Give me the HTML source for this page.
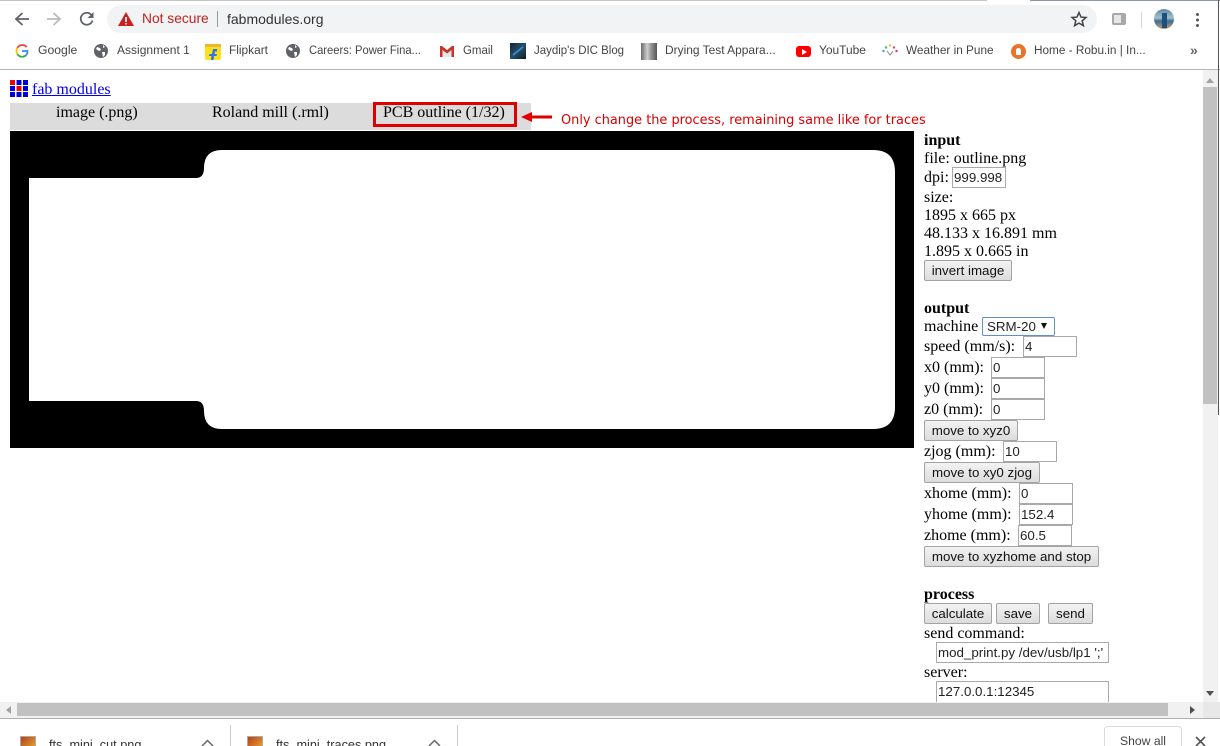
<!DOCTYPE html>
<html><head><meta charset="utf-8"><style>
html,body{margin:0;padding:0;width:1220px;height:746px;overflow:hidden;background:#fff}
body{position:relative;font-family:"Liberation Serif",serif;font-size:16px;color:#000}
.a{position:absolute;white-space:nowrap}
.t{position:absolute;white-space:nowrap;font-size:16px;line-height:18px;margin-top:1px}
.b{position:absolute;box-sizing:border-box;border:1px solid #a3a3a3;border-radius:2px;background:linear-gradient(#f3f3f3,#dcdcdc);font:13.33px/19px "Liberation Sans",sans-serif;color:#111;text-align:center;height:21px}
.i{position:absolute;box-sizing:border-box;border:1px solid #a9a9a9;background:#fff;font:13.33px/19px "Liberation Sans",sans-serif;color:#222;height:21px;padding-left:1px;white-space:nowrap;overflow:hidden}
.bm{position:absolute;top:43px;font:12.2px/15px "Liberation Sans",sans-serif;color:#444;white-space:nowrap;transform-origin:0 50%}
svg{position:absolute;overflow:visible}
</style></head><body>
<div class="a" style="left:0;top:0;width:987px;height:1px;background:#c4c4c4"></div>
<div class="a" style="left:1030px;top:0;width:190px;height:1px;background:#8a98a8"></div>
<div class="a" style="left:107px;top:5px;width:990px;height:28px;border-radius:14px;background:#f1f3f4"></div>

<svg style="left:14px;top:11px" width="16" height="16" viewBox="0 0 16 16"><path d="M15 8H2.500M8.500 2L2 8l6.500 6" fill="none" stroke="#5f6368" stroke-width="1.800"/></svg>
<svg style="left:46px;top:11px" width="16" height="16" viewBox="0 0 16 16"><path d="M1 8h12.500M7.500 2L14 8l-6.500 6" fill="none" stroke="#b9bbbe" stroke-width="1.800"/></svg>
<svg style="left:79px;top:11px" width="16" height="16" viewBox="0 0 16 16"><path d="M13.500 9.500A6 6 0 1 1 12.300 3.800" fill="none" stroke="#5f6368" stroke-width="1.800"/><path d="M14.500 1v6h-6z" fill="#5f6368"/></svg>
<svg style="left:118px;top:12px" width="16" height="14" viewBox="0 0 16 14"><path d="M8 0L16 14H0z" fill="#c5221f"/><path d="M7.200 5h1.600v5H7.200zM7.200 11h1.600v1.500H7.200z" fill="#fff"/></svg>
<div class="a" style="left:142px;top:11px;font:13.8px/16px 'Liberation Sans',sans-serif;color:#c5221f">Not secure</div>
<div class="a" style="left:217px;top:11px;width:1px;height:16px;background:#999"></div>
<div class="a" style="left:227px;top:11px;font:14px/16px 'Liberation Sans',sans-serif;color:#333">fabmodules.org</div>
<svg style="left:1071px;top:11px" width="16" height="16" viewBox="0 0 16 16"><path d="M8 1.500l2 4.600 5 .4-3.800 3.300 1.200 4.900L8 12.100l-4.400 2.600 1.200-4.900L1 6.500l5-.4z" fill="none" stroke="#444" stroke-width="1.500"/></svg>
<div class="a" style="left:1112px;top:13px;width:14px;height:12px;background:#a8a8a8;border-radius:2px"></div>
<div class="a" style="left:1114px;top:15px;width:7px;height:8px;background:#e6e6e6"></div>
<div class="a" style="left:1141px;top:12px;width:1px;height:16px;background:#d5d5d5"></div>
<div class="a" style="left:1154px;top:9px;width:20px;height:20px;border-radius:10px;background:linear-gradient(#5d8aa5 0,#a3c0c8 45%,#3a6d96 60%,#c8a06e 100%)"></div>
<div class="a" style="left:1162px;top:13px;width:5px;height:15px;background:#1f4f80"></div>
<div class="a" style="left:1196px;top:13px;width:3px;height:3px;border-radius:2px;background:#555;box-shadow:0 5.500px 0 #555,0 11px 0 #555"></div>

<svg style="left:15px;top:44px" width="14" height="14" viewBox="0 0 14 14"><path d="M11.700 3.200A5.500 5.500 0 0 0 2.500 3.800" fill="none" stroke="#ea4335" stroke-width="1.800"/><path d="M2.500 3.800a5.500 5.500 0 0 0 0 6.400" fill="none" stroke="#fbbc05" stroke-width="1.800"/><path d="M2.500 10.200a5.500 5.500 0 0 0 8.800 .7" fill="none" stroke="#34a853" stroke-width="1.800"/><path d="M7 7h5.500a5.500 5.500 0 0 1-1.200 3.900" fill="none" stroke="#4285f4" stroke-width="1.800"/></svg>
<div class="bm" style="left:38px">Google</div>
<svg style="left:94px;top:44px" width="14" height="14" viewBox="0 0 14 14"><circle cx="7" cy="7" r="7" fill="#5f6368"/><path d="M3 3l3 1 1 2-2 1-3-2zM8 8l3 0 0 3-2 2zM9 1l2 2-2 1z" fill="#fff"/></svg>
<div class="bm" style="left:117px;transform:scaleX(.986)">Assignment 1</div>
<div class="a" style="left:205px;top:44px;width:16px;height:16px;border-radius:2px;background:#fde016"></div>
<div class="a" style="left:205px;top:44px;width:16px;height:3px;background:#e9b934"></div>
<svg style="left:209px;top:49px" width="9" height="11" viewBox="0 0 9 11"><path d="M8 0H4L3 5H0.500L0 7h2.500L2 11h2.500L5 7h2.500L8 5H5.500L6 2.500h2z" fill="#2874f0"/></svg>
<div class="bm" style="left:229px;transform:scaleX(.975)">Flipkart</div>
<svg style="left:286px;top:44px" width="14" height="14" viewBox="0 0 14 14"><circle cx="7" cy="7" r="7" fill="#5f6368"/><path d="M3 3l3 1 1 2-2 1-3-2zM8 8l3 0 0 3-2 2zM9 1l2 2-2 1z" fill="#fff"/></svg>
<div class="bm" style="left:309px;transform:scaleX(.918)">Careers: Power Fina...</div>
<svg style="left:440px;top:46px" width="14" height="11" viewBox="0 0 14 11"><path d="M2.500 3L7 7l4.500-4v8h-9z" fill="#e8e8e8"/><path d="M0 0h2l5 4 5-4h2v11h-2.500V4L7 7.500 2.500 4v7H0z" fill="#c5372c"/></svg>
<div class="bm" style="left:463px;transform:scaleX(.94)">Gmail</div>
<div class="a" style="left:510px;top:43px;width:16px;height:16px;background:linear-gradient(135deg,#15222e,#24506e 50%,#101820)"></div>
<svg style="left:512px;top:45px" width="12" height="12" viewBox="0 0 12 12"><path d="M1 10L11 2" stroke="#3f8fd0" stroke-width="1.500"/></svg>
<div class="bm" style="left:534px;transform:scaleX(.94)">Jaydip's DIC Blog</div>
<div class="a" style="left:641px;top:43px;width:16px;height:17px;background:linear-gradient(90deg,#6b6b6b,#cfcfcf 40%,#9a9a9a 60%,#555)"></div>
<div class="bm" style="left:665px;transform:scaleX(.98)">Drying Test Appara...</div>
<div class="a" style="left:796px;top:46px;width:15px;height:11px;border-radius:3px;background:#f00"></div>
<div class="a" style="left:802px;top:49px;width:0;height:0;border-left:5px solid #fff;border-top:3px solid transparent;border-bottom:3px solid transparent"></div>
<div class="bm" style="left:819px;transform:scaleX(.98)">YouTube</div>
<svg style="left:882px;top:44px" width="16" height="13" viewBox="0 0 16 13"><circle cx="1.500" cy="7" r="1.200" fill="#3aa0d8"/><circle cx="4" cy="3.500" r="1.200" fill="#47b36b"/><circle cx="8" cy="1.500" r="1.200" fill="#f2b233"/><circle cx="12" cy="3.500" r="1.200" fill="#e04a7d"/><circle cx="14.500" cy="7" r="1.200" fill="#d8336e"/><path d="M5 7l3 4 3-4" fill="none" stroke="#888"/></svg>
<div class="bm" style="left:906px;transform:scaleX(.967)">Weather in Pune</div>
<div class="a" style="left:1011px;top:44px;width:15px;height:15px;border-radius:8px;background:#e8742a"></div>
<div class="a" style="left:1016px;top:48px;width:5px;height:7px;background:#fff;border-radius:3px 3px 0 0"></div>
<div class="bm" style="left:1034px;transform:scaleX(.966)">Home - Robu.in | In...</div>
<div class="a" style="left:1190px;top:42px;font:bold 14px/16px 'Liberation Sans',sans-serif;color:#666">»</div>
<div class="a" style="left:0;top:69px;width:1220px;height:1px;background:#b5b5b5"></div>

<svg style="left:10px;top:80px" width="18" height="17" viewBox="0 0 18 17"><g fill="#00d"><rect x="0" y="0" width="5" height="5" fill="#e00"/><rect x="6.500" y="0" width="5" height="5"/><rect x="13" y="0" width="5" height="5"/><rect x="0" y="6" width="5" height="5"/><rect x="6.500" y="6" width="5" height="5" fill="#e00"/><rect x="13" y="6" width="5" height="5"/><rect x="0" y="12" width="5" height="5"/><rect x="6.500" y="12" width="5" height="5"/><rect x="13" y="12" width="5" height="5"/></g></svg>
<a class="a" style="left:32px;top:81px;line-height:18px;font-size:16px;color:#00e;text-decoration:underline">fab modules</a>

<div class="a" style="left:10px;top:103px;width:521px;height:27px;background:#dcdcdc"></div>
<div class="t" style="left:56px;top:103px">image (.png)</div>
<div class="t" style="left:212px;top:103px">Roland mill (.rml)</div>
<div class="t" style="left:383px;top:103px">PCB outline (1/32)</div>
<div class="a" style="left:373px;top:102px;width:144px;height:25px;box-sizing:border-box;border:3px solid #e00000"></div>
<svg style="left:521px;top:112px" width="31" height="10" viewBox="0 0 31 10"><path d="M0 5L11 0v3.500h20v3H11V10z" fill="#e00000"/></svg>
<div class="a" style="left:561px;top:112px;margin-top:1px;font:13px/16px 'DejaVu Sans',sans-serif;color:#d90000;transform-origin:0 50%;transform:scaleX(.992)">Only change the process, remaining same like for traces</div>

<svg style="left:10px;top:131px" width="904" height="317" viewBox="0 0 904 317">
<rect width="904" height="317" fill="#000"/>
<path d="M19 47H186Q194 47 194 37Q194 19 212 19H863Q885 19 885 41V276Q885 298 863 298H212Q194 298 194 280Q194 270 186 270H19z" fill="#fff"/>
</svg>

<b class="t" style="left:924px;top:131px">input</b>
<div class="t" style="left:924px;top:149px">file: outline.png</div>
<div class="t" style="left:924px;top:168px">dpi:</div>
<div class="i" style="left:952px;top:167px;width:54px">999.998</div>
<div class="t" style="left:924px;top:188px">size:</div>
<div class="t" style="left:924px;top:206px">1895 x 665 px</div>
<div class="t" style="left:924px;top:224px">48.133 x 16.891 mm</div>
<div class="t" style="left:924px;top:242px">1.895 x 0.665 in</div>
<div class="b" style="left:924px;top:260px;width:88px">invert image</div>

<b class="t" style="left:924px;top:299px">output</b>
<div class="t" style="left:924px;top:317px">machine</div>
<div class="a" style="left:982px;top:317px;width:73px;height:19px;box-sizing:border-box;border:1px solid #5b8fd6;border-radius:2px;font:13.33px/17px 'Liberation Sans',sans-serif;padding-left:4px;color:#222">SRM-20</div>
<div class="a" style="left:1041px;top:323px;width:0;height:0;border-top:6px solid #111;border-left:3.500px solid transparent;border-right:3.500px solid transparent"></div>
<div class="t" style="left:924px;top:337px">speed (mm/s):</div>
<div class="i" style="left:1023px;top:336px;width:54px">4</div>
<div class="t" style="left:924px;top:358px">x0 (mm):</div>
<div class="i" style="left:991px;top:357px;width:54px">0</div>
<div class="t" style="left:924px;top:379px">y0 (mm):</div>
<div class="i" style="left:991px;top:378px;width:54px">0</div>
<div class="t" style="left:924px;top:400px">z0 (mm):</div>
<div class="i" style="left:991px;top:399px;width:54px">0</div>
<div class="b" style="left:924px;top:420px;width:94px">move to xyz0</div>
<div class="t" style="left:924px;top:442px">zjog (mm):</div>
<div class="i" style="left:1003px;top:441px;width:54px">10</div>
<div class="b" style="left:924px;top:462px;width:116px">move to xy0 zjog</div>
<div class="t" style="left:924px;top:484px">xhome (mm):</div>
<div class="i" style="left:1019px;top:483px;width:54px">0</div>
<div class="t" style="left:924px;top:505px">yhome (mm):</div>
<div class="i" style="left:1019px;top:504px;width:54px">152.4</div>
<div class="t" style="left:924px;top:526px">zhome (mm):</div>
<div class="i" style="left:1018px;top:525px;width:54px">60.5</div>
<div class="b" style="left:924px;top:546px;width:175px">move to xyzhome and stop</div>

<b class="t" style="left:924px;top:585px">process</b>
<div class="b" style="left:924px;top:603px;width:68px">calculate</div>
<div class="b" style="left:996px;top:603px;width:44px">save</div>
<div class="b" style="left:1048px;top:603px;width:45px">send</div>
<div class="t" style="left:924px;top:624px">send command:</div>
<div class="i" style="left:936px;top:642px;width:173px">mod_print.py /dev/usb/lp1 ';'</div>
<div class="t" style="left:924px;top:663px">server:</div>
<div class="i" style="left:936px;top:681px;width:173px;height:30px">127.0.0.1:12345</div>

<div class="a" style="left:1203px;top:70px;width:15px;height:633px;background:#f1f1f1"></div>
<div class="a" style="left:1203px;top:87px;width:14px;height:317px;background:#c1c1c1"></div>
<div class="a" style="left:1206px;top:78px;width:0;height:0;border-bottom:5px solid #a3a3a3;border-left:4px solid transparent;border-right:4px solid transparent"></div>
<div class="a" style="left:1206px;top:691px;width:0;height:0;border-top:5px solid #505050;border-left:4px solid transparent;border-right:4px solid transparent"></div>
<div class="a" style="left:1218px;top:0;width:1px;height:415px;background:#555"></div>
<div class="a" style="left:0;top:702px;width:1203px;height:16px;background:#f1f1f1"></div>
<div class="a" style="left:1203px;top:702px;width:17px;height:16px;background:#e8e8e8"></div>
<div class="a" style="left:17px;top:703px;width:1151px;height:13px;background:#c1c1c1"></div>
<div class="a" style="left:6px;top:706px;width:0;height:0;border-right:5px solid #a3a3a3;border-top:4px solid transparent;border-bottom:4px solid transparent"></div>
<div class="a" style="left:1190px;top:706px;width:0;height:0;border-left:5px solid #505050;border-top:4px solid transparent;border-bottom:4px solid transparent"></div>
<div class="a" style="left:0;top:718px;width:1220px;height:1px;background:#b0b0b0"></div>

<div class="a" style="left:20px;top:736px;width:16px;height:16px;box-sizing:border-box;border:1px solid #aaa;background:linear-gradient(135deg,#b8401c,#e6b035)"></div>
<div class="a" style="left:49px;top:737px;font:12.7px/16px 'Liberation Sans',sans-serif;color:#333">fts_mini_cut.png</div>
<svg style="left:201px;top:739px" width="13" height="8" viewBox="0 0 13 8"><path d="M1 7l5.500-5.500L12 7" fill="none" stroke="#666" stroke-width="1.500"/></svg>
<div class="a" style="left:230px;top:725px;width:1px;height:21px;background:#ccc"></div>
<div class="a" style="left:247px;top:736px;width:16px;height:16px;box-sizing:border-box;border:1px solid #aaa;background:linear-gradient(135deg,#b8401c,#e6b035)"></div>
<div class="a" style="left:276px;top:737px;font:12.7px/16px 'Liberation Sans',sans-serif;color:#333">fts_mini_traces.png</div>
<svg style="left:428px;top:739px" width="13" height="8" viewBox="0 0 13 8"><path d="M1 7l5.500-5.500L12 7" fill="none" stroke="#666" stroke-width="1.500"/></svg>
<div class="a" style="left:457px;top:725px;width:1px;height:21px;background:#ccc"></div>
<div class="a" style="left:1104px;top:726px;width:78px;height:30px;box-sizing:border-box;border:1px solid #dadada;border-radius:4px;font:12.2px/28px 'Liberation Sans',sans-serif;color:#444;text-align:center">Show all</div>
<svg style="left:1195px;top:736px" width="11" height="11" viewBox="0 0 11 11"><path d="M1 1l9 9M10 1l-9 9" stroke="#555" stroke-width="1.600"/></svg>
</body></html>
